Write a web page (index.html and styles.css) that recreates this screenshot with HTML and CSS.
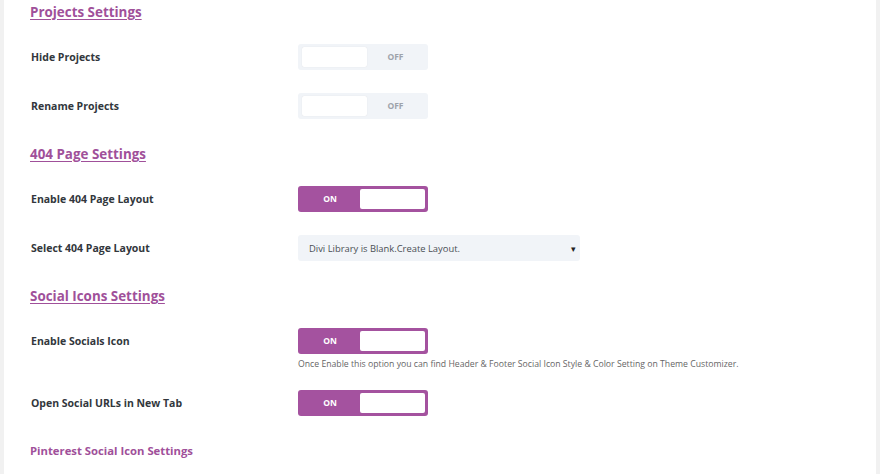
FILE: index.html
```html
<!DOCTYPE html>
<html lang="en">
<head>
    <meta charset="UTF-8">
    <meta name="viewport" content="width=device-width, initial-scale=1.0">
    <title>Theme Options</title>
    <link rel="stylesheet" href="styles.css">
</head>
<body>
    <div class="options-panel">

        <h2 class="section-title">Projects Settings</h2>

        <div class="option-row">
            <div class="option-label">Hide Projects</div>
            <div class="option-field">
                <div class="toggle off"><span class="knob"></span><span class="state">OFF</span></div>
            </div>
        </div>

        <div class="option-row">
            <div class="option-label">Rename Projects</div>
            <div class="option-field">
                <div class="toggle off"><span class="knob"></span><span class="state">OFF</span></div>
            </div>
        </div>

        <h2 class="section-title">404 Page Settings</h2>

        <div class="option-row">
            <div class="option-label">Enable 404 Page Layout</div>
            <div class="option-field">
                <div class="toggle on"><span class="state">ON</span><span class="knob"></span></div>
            </div>
        </div>

        <div class="option-row">
            <div class="option-label">Select 404 Page Layout</div>
            <div class="option-field">
                <div class="select-box">
                    <span>Divi Library is Blank.Create Layout.</span>
                    <span class="select-arrow">&#9662;</span>
                </div>
            </div>
        </div>

        <h2 class="section-title">Social Icons Settings</h2>

        <div class="option-row with-desc">
            <div class="option-label">Enable Socials Icon</div>
            <div class="option-field">
                <div class="toggle on"><span class="state">ON</span><span class="knob"></span></div>
                <p class="option-desc">Once Enable this option you can find Header &amp; Footer Social Icon Style &amp; Color Setting on Theme Customizer.</p>
            </div>
        </div>

        <div class="option-row">
            <div class="option-label">Open Social URLs in New Tab</div>
            <div class="option-field">
                <div class="toggle on"><span class="state">ON</span><span class="knob"></span></div>
            </div>
        </div>

        <h3 class="sub-title">Pinterest Social Icon Settings</h3>

    </div>
</body>
</html>
```

FILE: styles.css
```css
* {
    margin: 0;
    padding: 0;
    box-sizing: border-box;
}

body {
    font-family: 'Open Sans', 'Noto Sans', sans-serif;
    background: #f1f1f1;
    color: #32373c;
    height: 474px;
    overflow: hidden;
}

.options-panel {
    margin: 0 4px;
    height: 100%;
    background: #ffffff;
    padding: 0 0 0 26px;
}

.section-title {
    height: 24px;
    line-height: 24px;
    font-size: 13.4px;
    font-weight: 700;
    color: #a0509a;
    text-decoration: underline;
    text-underline-offset: 2px;
    margin: 0 0 20px;
}

.option-row + .section-title {
    margin-top: 1px;
}

.option-row {
    display: flex;
    align-items: flex-start;
    margin-bottom: 23px;
}

.option-label {
    width: 268px;
    padding-left: 1px;
    height: 26px;
    line-height: 26px;
    font-size: 10.5px;
    font-weight: 700;
    color: #32373c;
}

.option-field {
    display: flex;
    flex-direction: column;
}

/* toggle switch */
.toggle {
    width: 130px;
    height: 26px;
    border-radius: 3px;
    padding: 3px 4px;
    display: flex;
    align-items: stretch;
}

.toggle .knob {
    width: 65px;
    background: #ffffff;
    border-radius: 2px;
}

.toggle .state {
    flex: 1;
    text-align: center;
    font-size: 8.5px;
    font-weight: 700;
    line-height: 20px;
}

.toggle.off {
    background: #f1f4f8;
}

.toggle.off .knob {
    box-shadow: 0 0 1px rgba(0, 0, 0, 0.12);
}

.toggle.off .state {
    color: #9ea3ab;
}

.toggle.on {
    background: #a4529f;
    padding: 3px 3px 3px 4px;
}

.toggle.on .state {
    color: #ffffff;
    padding-right: 2px;
}

/* select */
.select-box {
    width: 282px;
    height: 26px;
    background: #f1f4f8;
    border-radius: 3px;
    display: flex;
    align-items: center;
    justify-content: space-between;
    padding: 0 4px 0 11px;
    font-size: 9.4px;
    color: #4a4f55;
}

.select-arrow {
    font-size: 9px;
    color: #222;
}

.option-desc {
    font-size: 8.7px;
    color: #666;
    line-height: 12px;
    margin-top: 4px;
}

.with-desc {
    margin-bottom: 20px;
}

.sub-title {
    height: 24px;
    line-height: 24px;
    font-size: 11.3px;
    font-weight: 700;
    color: #a0509a;
}
```
